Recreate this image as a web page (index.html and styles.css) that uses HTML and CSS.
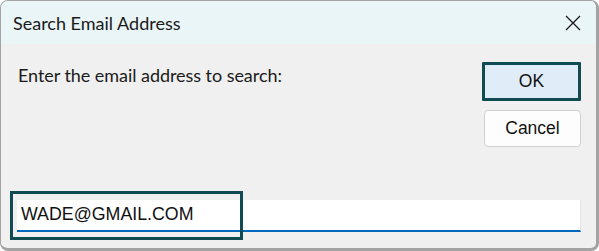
FILE: index.html
```html
<!DOCTYPE html>
<html>
<head>
<meta charset="utf-8">
<link rel="stylesheet" href="styles.css">
</head>
<body>
<div class="window">
  <div class="titlebar">
    <span class="title">Search Email Address</span>
    <span class="close">
      <svg width="16" height="16" viewBox="0 0 16 16"><path d="M1 1 L15 15 M15 1 L1 15" stroke="#1b1b1b" stroke-width="1.3" fill="none"/></svg>
    </span>
  </div>
  <div class="content">
    <div class="top-row">
      <div class="label">Enter the email address to search:</div>
      <div class="buttons">
        <button class="btn btn-ok">OK</button>
        <button class="btn btn-cancel">Cancel</button>
      </div>
    </div>
    <div class="field">WADE@GMAIL.COM</div>
  </div>
  <div class="highlight"></div>
</div>
</body>
</html>
```
FILE: styles.css
```css
html, body {
  margin: 0;
  padding: 0;
  background: #ffffff;
}
.window {
  position: relative;
  box-sizing: border-box;
  width: 599px;
  height: 251px;
  border-style: solid;
  border-color: #a3a3a3;
  border-width: 1px 3px 3px 1px;
  border-radius: 8px;
  background: #f0f0f0;
  overflow: hidden;
  display: flex;
  flex-direction: column;
  font-family: "Lato", "Liberation Sans", sans-serif;
  color: #1a1a1a;
}
.titlebar {
  height: 43px;
  flex: none;
  background: #eaf5f8;
  display: flex;
  align-items: center;
  justify-content: space-between;
  padding: 0 15px 0 12px;
}
.title {
  font-size: 18px;
}
.close {
  display: flex;
  width: 16px;
  height: 16px;
}
.content {
  flex: 1;
  display: flex;
  flex-direction: column;
  padding: 18px 15px 16px 16px;
}
.top-row {
  display: flex;
  justify-content: space-between;
  align-items: flex-start;
}
.label {
  font-size: 18px;
  letter-spacing: -0.05px;
  padding: 2px 0 0 1px;
}
.buttons {
  display: flex;
  flex-direction: column;
  align-items: flex-end;
  gap: 9px;
}
.btn {
  font-family: "Liberation Sans", Arial, sans-serif;
  font-size: 17.5px;
  color: #111;
  box-sizing: border-box;
  padding: 0;
}
.btn-ok {
  width: 99px;
  height: 39px;
  border: 3px solid #0f4b50;
  background: #e0ecf8;
  border-radius: 1px;
}
.btn-cancel {
  width: 97px;
  height: 37px;
  border: 1px solid #d0d0d0;
  background: #fdfdfd;
  border-radius: 4px;
}
.field {
  margin-top: auto;
  height: 32px;
  box-sizing: border-box;
  background: #ffffff;
  border-right: 1px solid #e4e4e4;
  border-bottom: 2px solid #0067c0;
  font-family: "Liberation Sans", Arial, sans-serif;
  font-size: 17.8px;
  padding: 4px 0 0 4px;
  color: #111;
}
.highlight {
  position: absolute;
  left: 9px;
  top: 190px;
  width: 233px;
  height: 49px;
  box-sizing: border-box;
  border: 3px solid #0f4b50;
}
```
